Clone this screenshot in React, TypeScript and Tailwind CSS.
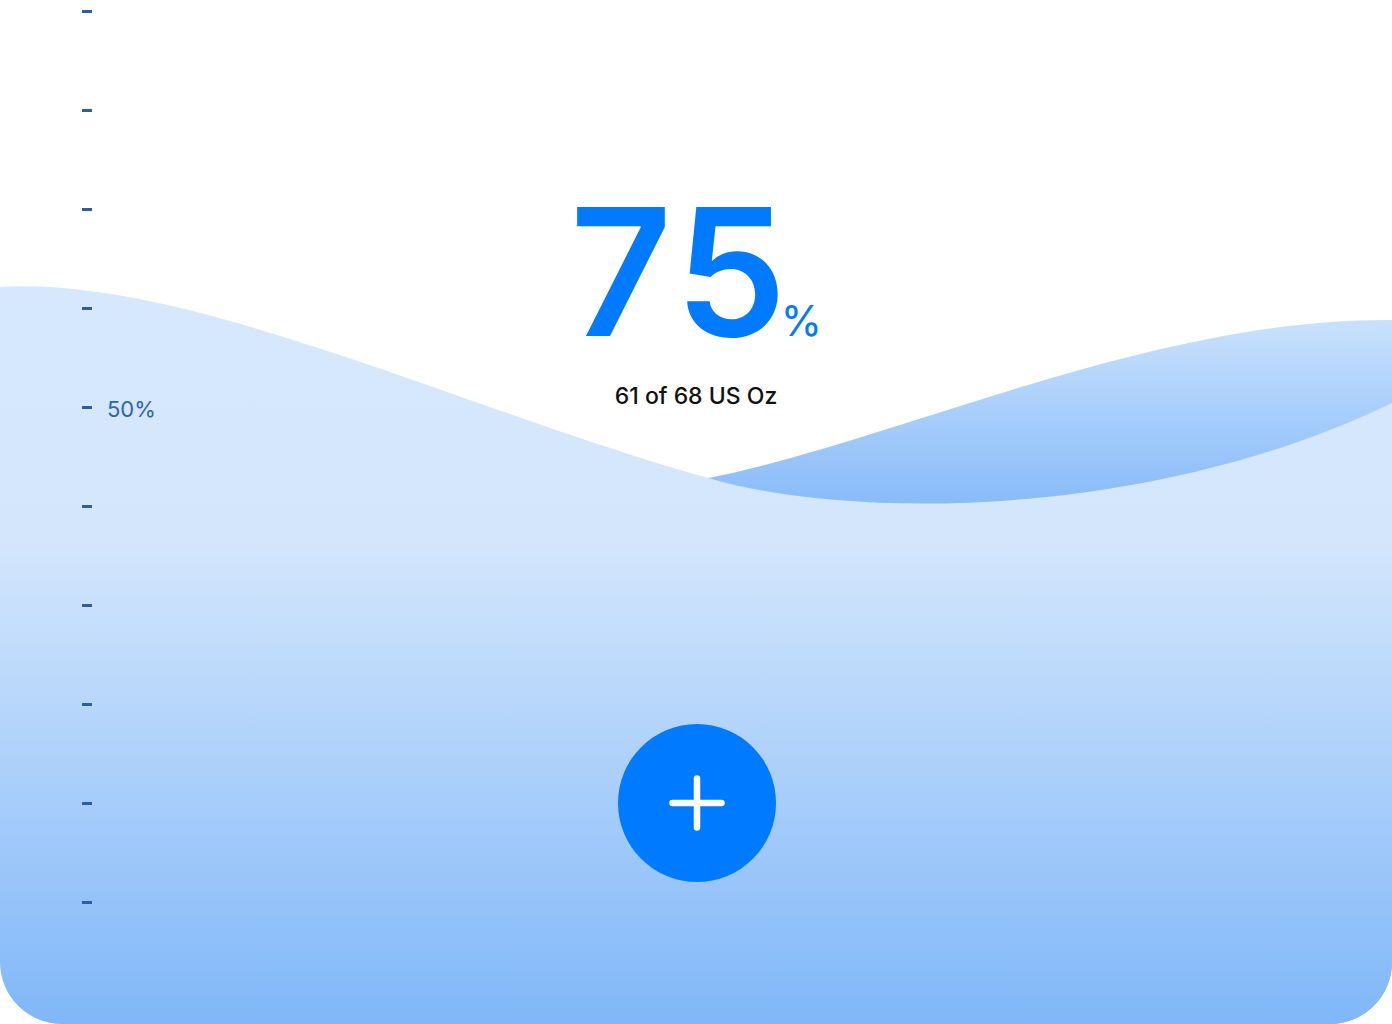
import React from "react";

const ticks = [0, 1, 2, 3, 4, 5, 6, 7, 8, 9];

function Waves() {
  return (
    <svg
      className="absolute inset-0"
      width="1392"
      height="1024"
      viewBox="0 0 1392 1024"
      preserveAspectRatio="none"
    >
      <defs>
        <linearGradient id="back" x1="0" y1="320" x2="0" y2="505" gradientUnits="userSpaceOnUse">
          <stop offset="0" stopColor="#c9e1fd" />
          <stop offset="1" stopColor="#88bbf8" />
        </linearGradient>
        <linearGradient id="front" x1="0" y1="285" x2="0" y2="1024" gradientUnits="userSpaceOnUse">
          <stop offset="0" stopColor="#d6e8fd" />
          <stop offset="0.35" stopColor="#d3e6fc" />
          <stop offset="1" stopColor="#80b7f8" />
        </linearGradient>
      </defs>
      <path
        d="M708,478 C900,440 1150,318 1392,320 L1392,1024 L708,1024 Z"
        fill="url(#back)"
      />
      <path
        d="M0,287 C190,276 470,412 708,478 C850,520 1150,520 1392,403 L1392,1024 L0,1024 Z"
        fill="url(#front)"
      />
    </svg>
  );
}

export default function App() {
  return (
    <div className="w-[1392px] h-[1024px] bg-white">
      <div
        className="relative w-[1392px] h-[1024px] overflow-hidden rounded-[62px] bg-white"
        style={{ fontFamily: "Inter, 'Liberation Sans', sans-serif" }}
      >
        <Waves />
        <div className="relative grid grid-cols-[1fr_auto_1fr] h-full">
          <div className="flex flex-col gap-[96.1px] pt-[9.5px] pl-[82px]">
            {ticks.map((i) => (
              <div key={i} className="flex items-center h-[3px] gap-[15px]">
                <div className="w-[10px] h-[3px] bg-[#2d5e9e] shrink-0" />
                {i === 4 && (
                  <span className="mt-[3px] text-[22px] leading-none text-[#2f64a7] whitespace-nowrap">
                    50%
                  </span>
                )}
              </div>
            ))}
          </div>
          <div className="flex flex-col items-center pt-[184px]">
            <div className="flex items-baseline text-[#007aff]">
              <span className="text-[177px] leading-none font-semibold tracking-[5px]">75</span>
              <span className="text-[42px] leading-none font-normal ml-[-11px]">%</span>
            </div>
            <div className="mt-[21px] text-[23px] leading-[28px] font-medium text-[#111111]">
              61 of 68 US Oz
            </div>
            <button className="mt-[314px] ml-[2px] w-[158px] h-[158px] rounded-full bg-[#007aff] flex items-center justify-center">
              <svg width="56" height="56" viewBox="0 0 56 56">
                <path
                  d="M28 3.5 V52.5 M3.5 28 H52.5"
                  stroke="white"
                  strokeWidth="6.5"
                  strokeLinecap="round"
                />
              </svg>
            </button>
          </div>
          <div />
        </div>
      </div>
    </div>
  );
}
